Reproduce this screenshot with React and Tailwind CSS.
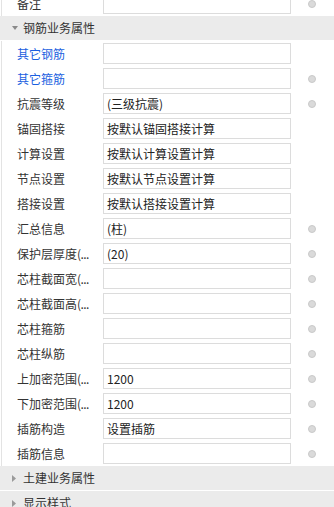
import React from "react";

const FONT = { fontFamily: '"Noto Sans CJK SC", "Microsoft YaHei", sans-serif' };

// ==================== Data ====================
const ROWS = [
    { label: "其它钢筋", value: "", blue: true, dot: false },
    { label: "其它箍筋", value: "", blue: true, dot: true },
    { label: "抗震等级", value: "(三级抗震)", dot: true },
    { label: "锚固搭接", value: "按默认锚固搭接计算", dot: false },
    { label: "计算设置", value: "按默认计算设置计算", dot: false },
    { label: "节点设置", value: "按默认节点设置计算", dot: false },
    { label: "搭接设置", value: "按默认搭接设置计算", dot: false },
    { label: "汇总信息", value: "(柱)", dot: true },
    { label: "保护层厚度", more: true, value: "(20)", dot: true },
    { label: "芯柱截面宽", more: true, value: "", dot: true },
    { label: "芯柱截面高", more: true, value: "", dot: true },
    { label: "芯柱箍筋", value: "", dot: true },
    { label: "芯柱纵筋", value: "", dot: true },
    { label: "上加密范围", more: true, value: "1200", dot: true },
    { label: "下加密范围", more: true, value: "1200", dot: true },
    { label: "插筋构造", value: "设置插筋", dot: true },
    { label: "插筋信息", value: "", dot: true },
];

// ==================== Pieces ====================
const Dot = ({ show }) => (
    <div className="ml-[17px] w-2 h-2 flex items-center justify-center">
        {show && <div className="w-2 h-2 rounded-full bg-[#dadada] border border-[#c9c9c9]"></div>}
    </div>
);

const PropRow = ({ label, more, value, blue, dot }) => (
    <div className="flex items-center h-[25px] ml-px border-l border-[#e3e3e3]">
        <div
            className={`pl-[15px] w-[101px] shrink-0 whitespace-nowrap text-[12px] leading-[16px] ${blue ? "text-[#1b5fdf]" : "text-[#333333]"}`}
        >
            {label}
            {more && <span className="tracking-[-0.6px]">(...</span>}
        </div>
        <div className="w-[188px] h-[21px] shrink-0 border border-[#dcdcdc] bg-white flex items-center pl-[3px] text-[12px] leading-[16px] text-[#222222] whitespace-nowrap">
            {value}
        </div>
        <Dot show={dot} />
    </div>
);

const GroupHeader = ({ title, open }) => (
    <div className="flex items-center h-[25px] bg-[#ebebeb] border-b border-white">
        <div className="w-[23px] pl-[12px] flex items-center">
            {open ? (
                <svg width="6" height="4" viewBox="0 0 6 4">
                    <path d="M0 0 L6 0 L3 4 Z" fill="#8a8a8a" />
                </svg>
            ) : (
                <svg width="4" height="7" viewBox="0 0 4 7">
                    <path d="M0 0 L4 3.5 L0 7 Z" fill="#9a9a9a" />
                </svg>
            )}
        </div>
        <span className="text-[12px] leading-[16px] text-[#333333]">{title}</span>
    </div>
);

// ==================== Main ====================
const App = () => (
    <div className="w-[334px] h-[507px] overflow-hidden bg-white" style={FONT}>
        <div className="-mt-[9px]">
            <PropRow label="备注" value="" dot />
            <GroupHeader title="钢筋业务属性" open />
            {ROWS.map((r) => (
                <PropRow key={r.label} {...r} />
            ))}
            <GroupHeader title="土建业务属性" />
            <GroupHeader title="显示样式" />
        </div>
    </div>
);

export default App;
